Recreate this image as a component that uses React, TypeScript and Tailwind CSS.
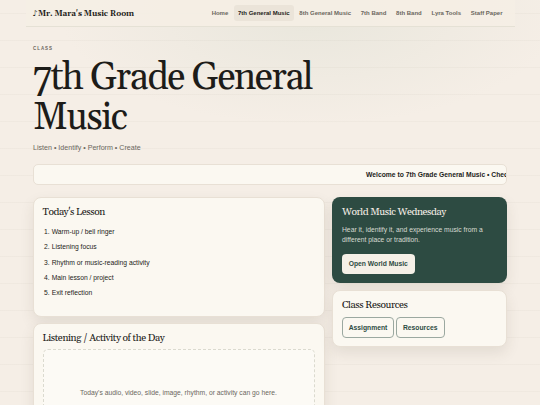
import { clsx } from 'clsx'

const navItems = [
  { label: 'Home' },
  { label: '7th General Music', active: true },
  { label: '8th General Music' },
  { label: '7th Band' },
  { label: '8th Band' },
  { label: 'Lyra Tools' },
  { label: 'Staff Paper' },
]

const lessonSteps = [
  'Warm-up / bell ringer',
  'Listening focus',
  'Rhythm or music-reading activity',
  'Main lesson / project',
  'Exit reflection',
]

const serif = "font-[Georgia,Gelasio,'Liberation_Serif',serif]"
const cardTitle = clsx(serif, 'text-[10.2px] leading-[13px] tracking-[-0.42px] whitespace-nowrap')
const card = 'rounded-[8px] border border-[#e8e0d5] bg-[#fbf8f1] shadow-[0_6px_14px_rgba(70,60,40,0.10)]'

function Header() {
  return (
    <header className="mx-[25.5px] flex h-[27px] items-center justify-between border-b border-[#e5e1d5] bg-[#f5eee4]/90 pr-[8px] pl-[7px]">
      <div className="flex items-center gap-[1px] pt-[2px] whitespace-nowrap text-[#1d1c19]">
        <span className="w-[3.5px] font-['DejaVu_Sans',sans-serif] text-[8px] leading-[12px]">♪</span>
        <span className={clsx(serif, 'ml-[1px] text-[7.9px] leading-[12px] font-bold tracking-[-0.06px]')}>
          Mr. Mara's Music Room
        </span>
      </div>
      <nav className="flex gap-[1.7px] text-[6px] font-bold whitespace-nowrap">
        {navItems.map((item) => (
          <a
            key={item.label}
            className={clsx(
              'flex h-[16px] items-center justify-center rounded-[3px] px-[4px]',
              item.active ? 'bg-[#ebe4d9] text-[#1d1c19]' : 'text-[#6b675e]',
            )}
          >
            {item.label}
          </a>
        ))}
      </nav>
    </header>
  )
}

function Hero() {
  return (
    <section className="pt-[17.5px]">
      <p className="h-[8px] text-[4.5px] leading-[8px] font-bold tracking-[0.95px] text-[#6b675e]">CLASS</p>
      <h1 className={clsx(serif, 'mt-[5px] text-[37.5px] leading-[40.3px] tracking-[-1.42px] text-[#1d1c19]')}>
        7th Grade General
        <br />
        Music
      </h1>
      <p className="mt-[5px] text-[7.1px] leading-[10px] text-[#6b675e]">Listen • Identify • Perform • Create</p>
    </section>
  )
}

export default function App() {
  return (
    <div className="relative h-[405px] w-[540px] overflow-hidden bg-[#f5eee6] bg-[repeating-linear-gradient(to_bottom,transparent_0,transparent_13px,rgba(90,85,60,0.035)_13px,rgba(90,85,60,0.035)_13.5px),radial-gradient(ellipse_250px_110px_at_310px_15px,rgba(195,207,190,0.24),transparent)] font-['Liberation_Sans',Arial,sans-serif] text-[#1d1c19]">
      <Header />
      <main className="mx-[33px]">
        <Hero />
        <div className="mt-[11px] flex h-[21px] items-center overflow-hidden rounded-[5px] border border-[#e8e0d5] bg-[#fbf8f1] pl-[332px] text-[6.75px] font-bold whitespace-nowrap">
          Welcome to 7th Grade General Music • Check
        </div>

        <div className="mt-[12px] grid grid-cols-[292px_175px] items-start gap-[7px]">
          <div className="flex flex-col gap-[6.5px]">
            <section className={clsx(card, 'h-[119.5px] px-[8.5px] pt-[8px]')}>
              <h2 className={cardTitle}>Today's Lesson</h2>
              <ol className="mt-[5px] ml-[1.5px] text-[6.75px] leading-[15.2px]">
                {lessonSteps.map((step, i) => (
                  <li key={step} className="flex gap-[2px]">
                    <span>{i + 1}.</span>
                    {step}
                  </li>
                ))}
              </ol>
            </section>
            <section className={clsx(card, 'h-[140px] pt-[8px] pr-[9.5px] pl-[8.5px]')}>
              <h2 className={cardTitle}>Listening / Activity of the Day</h2>
              <div className="mt-[4px] flex h-[88px] items-center justify-center rounded-[5px] border border-dashed border-[#dbdacf] bg-[#fcfaf5] text-[6.75px] text-[#6b675e]">
                Today's audio, video, slide, image, rhythm, or activity can go here.
              </div>
            </section>
          </div>

          <aside className="flex flex-col gap-[7px]">
            <section className="h-[86px] rounded-[8px] bg-[#2d4b42] px-[10px] pt-[9px] text-[#f5eee6] shadow-[0_6px_14px_rgba(70,60,40,0.10)]">
              <h2 className={cardTitle}>World Music Wednesday</h2>
              <p className="mt-[5.5px] text-[6.75px] leading-[10px] whitespace-nowrap text-[#d8dbd2]">
                Hear it, identify it, and experience music from a
                <br />
                different place or tradition.
              </p>
              <a className="mt-[9px] flex h-[20.5px] w-[72.5px] items-center justify-center rounded-[4px] bg-[#f5f0e7] text-[6.75px] font-bold whitespace-nowrap text-[#2d4b42]">
                Open World Music
              </a>
            </section>
            <section className={clsx(card, 'h-[57px] px-[9px] pt-[8px]')}>
              <h2 className={cardTitle}>Class Resources</h2>
              <div className="mt-[5px] flex gap-[2px] text-[6.75px] font-bold text-[#2d4b42]">
                <a className="flex h-[21px] w-[52px] items-center justify-center rounded-[4px] border border-[#9ba8a0]">
                  Assignment
                </a>
                <a className="flex h-[21px] w-[48.5px] items-center justify-center rounded-[4px] border border-[#9ba8a0]">
                  Resources
                </a>
              </div>
            </section>
          </aside>
        </div>
      </main>
    </div>
  )
}
